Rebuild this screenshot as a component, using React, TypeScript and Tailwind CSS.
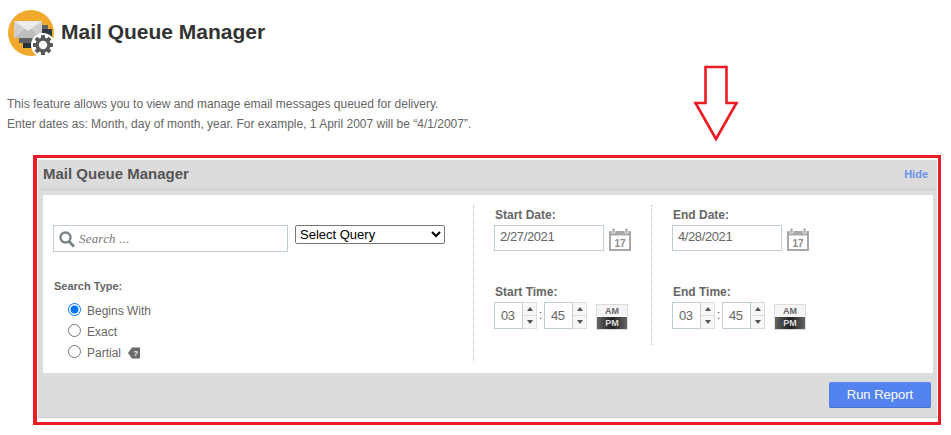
import React from 'react';

const MailIcon = () => (
  <svg width="47" height="47" viewBox="0 0 47 47" className="shrink-0">
    <circle cx="23" cy="23" r="23" fill="#f0a92c" />
    <rect x="30" y="15" width="10" height="8" fill="#5f6264" />
    <rect x="34" y="19" width="10" height="14" fill="#2c3a44" />
    <rect x="11" y="28" width="24" height="5" fill="#5f6264" />
    <rect x="15" y="33" width="16" height="5" fill="#26343e" />
    <rect x="6" y="11" width="28" height="17" fill="#cfcfcf" />
    <path d="M6 11 L20 21 L34 11 Z" fill="#ececec" />
    <path d="M6 28 L17 19 L20 21 L23 19 L34 28 Z" fill="#bdbdbd" />
  </svg>
);

const Gear = () => (
  <svg width="24" height="24" viewBox="0 0 24 24">
    <circle cx="12" cy="12" r="12" fill="#ffffff" />
    <g fill="#58595b">
      <rect x="10" y="2" width="4" height="20" rx="0.6" />
      <rect x="10" y="2" width="4" height="20" rx="0.6" transform="rotate(45 12 12)" />
      <rect x="10" y="2" width="4" height="20" rx="0.6" transform="rotate(90 12 12)" />
      <rect x="10" y="2" width="4" height="20" rx="0.6" transform="rotate(135 12 12)" />
    </g>
    <circle cx="12" cy="12" r="7.6" fill="#58595b" />
    <circle cx="12" cy="12" r="4.2" fill="#ffffff" />
  </svg>
);

const CalendarIcon = () => (
  <svg width="22" height="23" viewBox="0 0 22 23" className="shrink-0">
    <path d="M0 3 H22 V23 H0 Z" fill="#a8a8a8" />
    <rect x="2" y="7.5" width="18" height="13.5" fill="#ffffff" />
    <rect x="3" y="0" width="3" height="5.5" rx="1.5" fill="#a8a8a8" stroke="#ffffff" strokeWidth="0.8" />
    <rect x="16" y="0" width="3" height="5.5" rx="1.5" fill="#a8a8a8" stroke="#ffffff" strokeWidth="0.8" />
    <text x="11" y="18.5" textAnchor="middle" fontSize="10" fontWeight="700" fill="#8a8a8a" fontFamily="Liberation Sans">17</text>
  </svg>
);

const TagIcon = () => (
  <svg width="12" height="12" viewBox="0 0 12 12" className="ml-[7px] shrink-0">
    <path d="M4 0.5 H12 V11.5 H4 L0 6 Z" fill="#6b6b6b" />
    <text x="7.6" y="8.8" textAnchor="middle" fontSize="8" fontWeight="700" fill="#ffffff" fontFamily="Liberation Sans">?</text>
  </svg>
);

const Spinner = ({ value }: { value: string }) => (
  <div className="flex h-[27px]">
    <div className="w-[29px] border border-[#c0d0d0] bg-white pl-[6px] text-[13px] tracking-[-0.4px] leading-[25px] text-[#666]">{value}</div>
    <div className="w-[14px] flex flex-col border-y border-r border-[#dcdcdc] bg-[#f7f7f7]">
      <div className="flex-1 flex items-center justify-center border-b border-[#dcdcdc]">
        <div className="w-0 h-0 border-x-[3.5px] border-x-transparent border-b-[4px] border-b-[#555]" />
      </div>
      <div className="flex-1 flex items-center justify-center">
        <div className="w-0 h-0 border-x-[3.5px] border-x-transparent border-t-[4px] border-t-[#555]" />
      </div>
    </div>
  </div>
);

const AmPm = () => (
  <div className="w-[32px] h-[26px] ml-[9px] mt-[2px] flex flex-col border border-[#dcdcdc] text-[9px] font-bold text-center leading-[12px]">
    <div className="h-[12px] bg-[#f5f5f5] text-[#666]">AM</div>
    <div className="flex-1 bg-gradient-to-r from-[#666] via-[#222] to-[#666] text-[#ddd]">PM</div>
  </div>
);

const DateTimeColumn = ({ dateLabel, date, timeLabel, lineClass, widthClass }: { dateLabel: string; date: string; timeLabel: string; lineClass: string; widthClass: string }) => (
  <div className={`relative ${widthClass} pl-[21px] pt-[13px]`}>
    <div className={`absolute left-0 top-[10px] border-l border-dotted border-[#bbb] ${lineClass}`} />
    <div className="ml-[1px] text-[12px] font-bold leading-[14px] text-[#666]">{dateLabel}</div>
    <div className="flex items-start mt-[3px]">
      <div className="w-[110px] h-[26px] border border-[#c0d0d0] pl-[5px] text-[13px] tracking-[-0.4px] leading-[22px] text-[#666]">{date}</div>
      <div className="ml-[5px] mt-[3px]"><CalendarIcon /></div>
    </div>
    <div className="ml-[1px] text-[12px] font-bold leading-[14px] text-[#666] mt-[34px]">{timeLabel}</div>
    <div className="flex items-start mt-[3px]">
      <Spinner value="03" />
      <div className="w-[7px] text-center text-[13px] leading-[25px] text-[#666]">:</div>
      <Spinner value="45" />
      <AmPm />
    </div>
  </div>
);

const RadioRow = ({ label, checked, tag }: { label: string; checked?: boolean; tag?: boolean }) => (
  <label className="flex items-center h-[21px] text-[12px] text-[#666]">
    <input type="radio" name="searchType" defaultChecked={checked} className="w-[13px] h-[13px] m-0 mb-[2px]" />
    <span className="ml-[6px] mt-[1px]">{label}</span>
    {tag && <TagIcon />}
  </label>
);

export default function App() {
  return (
    <div className="relative w-[951px] h-[435px] overflow-hidden bg-white font-['Liberation_Sans',Arial,sans-serif]">
      <div className="flex items-center pl-[8px] pt-[10px]">
        <div className="relative flex">
          <MailIcon />
          <div className="absolute left-[23px] top-[23px]"><Gear /></div>
        </div>
        <h1 className="ml-[6px] mb-[4px] text-[21px] font-bold text-[#333]">Mail Queue Manager</h1>
      </div>

      <div className="mt-[37px] pl-[7px] text-[12px] leading-[20px] text-[#666]">
        <p>This feature allows you to view and manage email messages queued for delivery.</p>
        <p>Enter dates as: Month, day of month, year. For example, 1 April 2007 will be “4/1/2007”.</p>
      </div>

      {/* annotation arrow */}
      <svg width="46" height="80" viewBox="0 0 46 80" className="absolute left-[693px] top-[64px]">
        <path d="M12.5 3 H33.5 V39 H43.5 L23 75 L2.5 39 H12.5 Z" fill="#ffffff" stroke="#ed1c24" strokeWidth="2.6" />
      </svg>

      <div className="ml-[33px] mt-[21px] w-[908px] h-[270px] border-[3px] border-l-4 border-[#ed1c24] p-[1px] pt-[2px] pb-[4px]">
        <div className="h-full bg-[#dcdcdc] flex flex-col border-b border-[#c5d0d4]">
          <div className="h-[30px] shrink-0 flex items-center justify-between pl-[5px] pr-[9px] border-b border-[#c5d0d4]">
            <h2 className="text-[15px] font-bold text-[#555]">Mail Queue Manager</h2>
            <a className="text-[11px] font-bold text-[#6a90f0]">Hide</a>
          </div>
          <div className="ml-[5px] mr-[4px] mt-[5px] h-[178px] bg-white flex shrink-0">
            <div className="w-[430px] pl-[10px] pt-[30px]">
              <div className="flex items-start">
                <div className="w-[235px] h-[27px] flex items-center border border-[#c0d0d0] pl-[5px]">
                  <svg width="16" height="18" viewBox="0 0 16 18" fill="none" stroke="#7b8587" strokeWidth="2.4">
                    <circle cx="6.5" cy="7.5" r="5" />
                    <path d="M10 11.5 L15 16.5" strokeWidth="3" />
                  </svg>
                  <span className="ml-[4px] font-['Liberation_Serif',serif] italic text-[13px] tracking-[0.2px] text-[#777]">Search ...</span>
                </div>
                <select className="ml-[7px] w-[150px] h-[19px] border border-[#767676] rounded-[2px] bg-white text-[13px] text-black">
                  <option>Select Query</option>
                </select>
              </div>
              <div className="ml-[1px] mt-[27px] text-[11px] font-bold leading-[14px] text-[#666]">Search Type:</div>
              <div className="ml-[15px] mt-[7px]">
                <RadioRow label="Begins With" checked />
                <RadioRow label="Exact" />
                <RadioRow label="Partial" tag />
              </div>
            </div>
            <DateTimeColumn dateLabel="Start Date:" date="2/27/2021" timeLabel="Start Time:" lineClass="h-[157px]" widthClass="w-[178px]" />
            <DateTimeColumn dateLabel="End Date:" date="4/28/2021" timeLabel="End Time:" lineClass="h-[140px]" widthClass="w-[200px]" />
          </div>
          <div className="flex justify-end pr-[1px] pt-[9px] mr-[5px]">
            <button className="w-[102px] h-[26px] pt-[1px] bg-[#5383ee] border-b border-[#4a72cc] rounded-[2px] text-[13px] text-white">Run Report</button>
          </div>
        </div>
      </div>
    </div>
  );
}
